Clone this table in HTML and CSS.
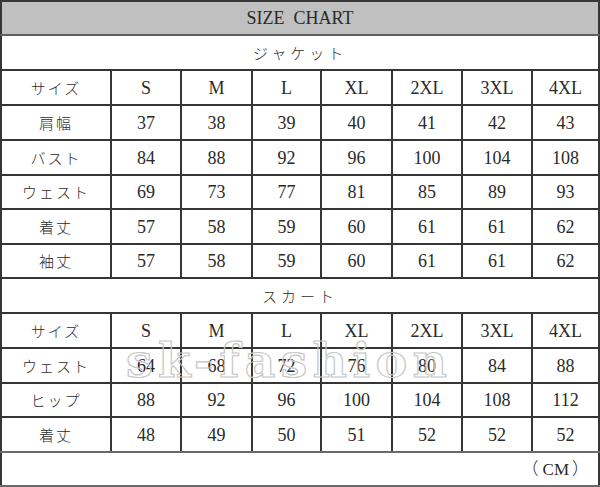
FILE: index.html
```html
<!DOCTYPE html>
<html lang="ja">
<head>
<meta charset="utf-8">
<title>SIZE CHART</title>
<link rel="stylesheet" href="styles.css">
</head>
<body>
<div class="chart">
<table class="grid">
<colgroup>
<col class="c-label"><col class="c1"><col class="c2"><col class="c3"><col class="c4"><col class="c5"><col class="c6"><col class="c7">
</colgroup>
<tbody>
<tr class="r-title"><td colspan="8" class="title">SIZE  CHART</td></tr>
<tr class="r-section"><td colspan="8" class="section">ジャケット</td></tr>
<tr><td class="jp">サイズ</td><td>S</td><td>M</td><td>L</td><td>XL</td><td>2XL</td><td>3XL</td><td>4XL</td></tr>
<tr><td class="jp">肩幅</td><td>37</td><td>38</td><td>39</td><td>40</td><td>41</td><td>42</td><td>43</td></tr>
<tr><td class="jp">バスト</td><td>84</td><td>88</td><td>92</td><td>96</td><td>100</td><td>104</td><td>108</td></tr>
<tr><td class="jp">ウェスト</td><td>69</td><td>73</td><td>77</td><td>81</td><td>85</td><td>89</td><td>93</td></tr>
<tr><td class="jp">着丈</td><td>57</td><td>58</td><td>59</td><td>60</td><td>61</td><td>61</td><td>62</td></tr>
<tr><td class="jp">袖丈</td><td>57</td><td>58</td><td>59</td><td>60</td><td>61</td><td>61</td><td>62</td></tr>
<tr class="r-section"><td colspan="8" class="section">スカート</td></tr>
<tr><td class="jp">サイズ</td><td>S</td><td>M</td><td>L</td><td>XL</td><td>2XL</td><td>3XL</td><td>4XL</td></tr>
<tr><td class="jp">ウェスト</td><td>64</td><td>68</td><td>72</td><td>76</td><td>80</td><td>84</td><td>88</td></tr>
<tr><td class="jp">ヒップ</td><td>88</td><td>92</td><td>96</td><td>100</td><td>104</td><td>108</td><td>112</td></tr>
<tr class="r-last"><td class="jp">着丈</td><td>48</td><td>49</td><td>50</td><td>51</td><td>52</td><td>52</td><td>52</td></tr>
<tr class="r-unit"><td colspan="8" class="unit"><span class="paren paren-open">（</span>CM<span class="paren paren-close">）</span></td></tr>
</tbody>
</table>
<div class="watermark">sk-fashion</div>
</div>
</body>
</html>
```
FILE: styles.css
```css
html, body {
  margin: 0;
  padding: 0;
  background: #ffffff;
}

.chart {
  position: relative;
  width: 600px;
  height: 487px;
  overflow: hidden;
}

.grid {
  border-collapse: collapse;
  table-layout: fixed;
  width: 598px;
  color: #2a2a2a;
  font-family: "Liberation Serif", "Noto Sans CJK JP", serif;
  font-size: 18px;
}

.c-label { width: 110px; }
.c1 { width: 70px; }
.c2 { width: 71px; }
.c3 { width: 69px; }
.c4 { width: 71px; }
.c5 { width: 70px; }
.c6 { width: 70px; }
.c7 { width: 67px; }

.grid td {
  border: 2px solid #363636;
  padding: 0;
  text-align: center;
  vertical-align: middle;
  height: 33px;
  line-height: 20px;
}

.grid tr:nth-child(1) td { height: 32px; }
.grid tr:nth-child(6) td,
.grid tr:nth-child(8) td,
.grid tr:nth-child(12) td,
.grid tr:nth-child(14) td { height: 32px; }

.title {
  background: #c0c0c0;
  white-space: pre;
  font-size: 18px;
  border-bottom-color: #5e5e5e !important;
}

.section {
  font-family: "Noto Sans CJK JP", sans-serif;
  font-size: 15px;
  letter-spacing: 4px;
  font-weight: 300;
}

.jp {
  font-family: "Noto Sans CJK JP", sans-serif;
  font-size: 15px;
  letter-spacing: 2px;
  font-weight: 300;
}

.r-last td {
  border-bottom-color: #6a6a6a;
}

.unit {
  text-align: right !important;
  padding-right: 9px !important;
  font-family: "Liberation Serif", serif;
  font-size: 17px;
  border-bottom-color: #6a6a6a !important;
}

.paren {
  font-family: "Noto Sans CJK JP", sans-serif;
  font-weight: 300;
}

.paren-open { margin-right: 4px; }
.paren-close { margin-left: 3px; }

.watermark {
  position: absolute;
  left: 126px;
  top: 334px;
  font-family: "DejaVu Serif", serif;
  font-weight: bold;
  font-size: 47px;
  line-height: 54px;
  letter-spacing: 5.5px;
  color: transparent;
  -webkit-text-stroke: 1.2px #c6c6c6;
  pointer-events: none;
}
```
